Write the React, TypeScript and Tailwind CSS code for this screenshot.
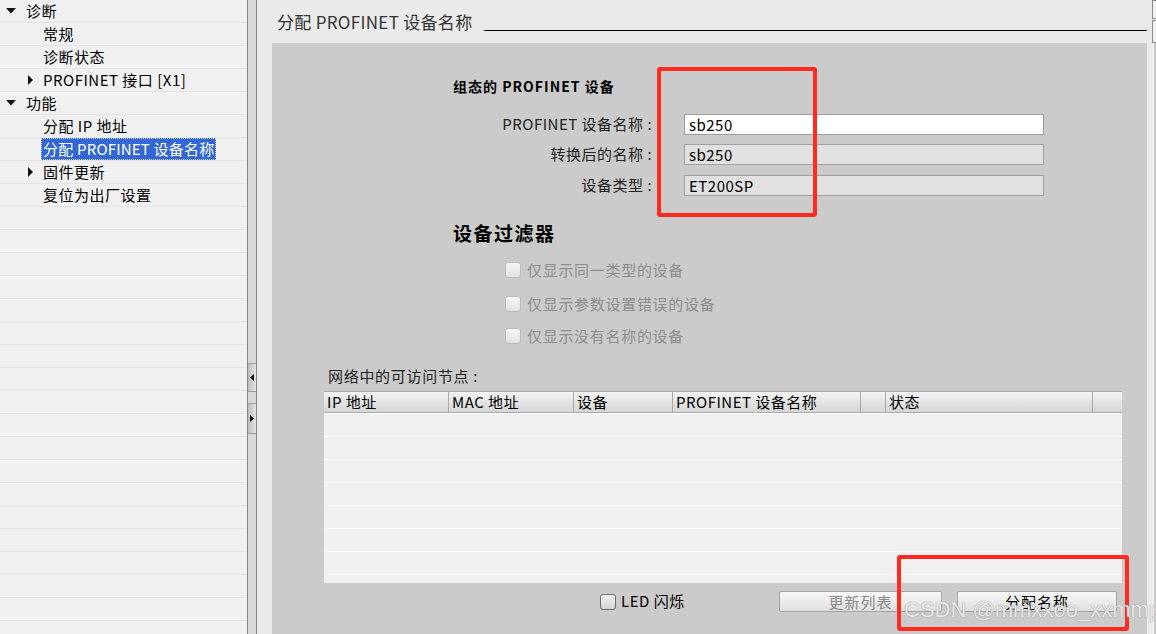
import React from 'react';

// 树形导航的条目
type TreeItem = {
  text: string;
  level: 0 | 1;
  arrow?: 'down' | 'right';
  selected?: boolean;
};

const treeItems: TreeItem[] = [
  { text: '诊断', level: 0, arrow: 'down' },
  { text: '常规', level: 1 },
  { text: '诊断状态', level: 1 },
  { text: 'PROFINET 接口 [X1]', level: 1, arrow: 'right' },
  { text: '功能', level: 0, arrow: 'down' },
  { text: '分配 IP 地址', level: 1 },
  { text: '分配 PROFINET 设备名称', level: 1, selected: true },
  { text: '固件更新', level: 1, arrow: 'right' },
  { text: '复位为出厂设置', level: 1 },
];

const columns = [
  { label: 'IP 地址', w: 'w-[125px]' },
  { label: 'MAC 地址', w: 'w-[125px]' },
  { label: '设备', w: 'w-[99px]' },
  { label: 'PROFINET 设备名称', w: 'w-[188px]' },
  { label: '', w: 'w-[25px]' },
  { label: '状态', w: 'w-[207px]' },
];

const DownArrow = () => (
  <svg width="10" height="6" viewBox="0 0 10 6">
    <path d="M0 0h10L5 5.5z" fill="#111" />
  </svg>
);

const RightArrow = () => (
  <svg width="5" height="10" viewBox="0 0 5 10">
    <path d="M0 0l5 5-5 5z" fill="#111" />
  </svg>
);

const CheckBox = ({ disabled }: { disabled?: boolean }) => (
  <span
    className={
      disabled
        ? 'inline-block w-[16px] h-[16px] shrink-0 rounded-[3px] border border-[#bcbcbc] bg-linear-to-b from-[#f6f6f6] to-[#e2e2e2]'
        : 'inline-block w-[16px] h-[16px] shrink-0 rounded-[3px] border border-[#6c6c6c] bg-linear-to-b from-[#f2f2f2] to-[#d2d2d2]'
    }
  />
);

const TreeRow = ({ item }: { item?: TreeItem }) => (
  <div className="h-[23px] border-b border-[#e3e3e3] flex items-center">
    {item && (
      <>
        {item.level === 0 ? (
          <div className="w-[24px] pl-[6px] flex items-center">{item.arrow && <DownArrow />}</div>
        ) : (
          <div className="w-[41px] pl-[28px] flex items-center">{item.arrow && <RightArrow />}</div>
        )}
        <span
          className={
            item.selected
              ? 'h-[22px] leading-[22px] px-[2px] bg-[#3367d6] text-white outline outline-dotted outline-[#c8d4f0] -outline-offset-1 tracking-[0.2px]'
              : 'h-[22px] leading-[22px] px-[2px] text-black'
          }
        >
          {item.text}
        </span>
      </>
    )}
  </div>
);

const App: React.FC = () => {
  const emptyRows = Array.from({ length: 28 - treeItems.length });

  return (
    <div className="relative flex h-[634px] w-[1156px] overflow-hidden font-['Noto_Sans_CJK_SC',sans-serif] text-[15px] tracking-[0.5px] text-black">
      {/* 左侧项目树 */}
      <div className="w-[247px] shrink-0 bg-[#f0f0f0]">
        {treeItems.map((item, i) => (
          <TreeRow key={i} item={item} />
        ))}
        {emptyRows.map((_, i) => (
          <TreeRow key={'e' + i} />
        ))}
      </div>

      {/* 分隔条 */}
      <div className="w-[10px] shrink-0 flex flex-col border-x border-[#858585] bg-[#d9d9d9]">
        <div className="h-[363px]" />
        <div className="h-[29px] border-y border-[#9b9b9b] bg-linear-to-r from-[#bcbcbc] to-[#e4e4e4] flex items-center pl-[2px]">
          <svg width="4" height="7" viewBox="0 0 4 7">
            <path d="M4 0v7L0 3.5z" fill="#111" />
          </svg>
        </div>
        <div className="h-[11px]" />
        <div className="h-[31px] border-y border-[#9b9b9b] bg-linear-to-r from-[#bcbcbc] to-[#e4e4e4] flex items-center pl-[2px]">
          <svg width="4" height="7" viewBox="0 0 4 7">
            <path d="M0 0v7l4-3.5z" fill="#111" />
          </svg>
        </div>
      </div>

      {/* 右侧内容 */}
      <div className="flex-1 flex bg-[#eaeaea]">
        <div className="flex-1 flex flex-col pl-[15px] pr-[5px]">
          <div className="h-[43px] flex items-start">
            <span className="mt-[11px] pl-[5px] leading-[22px] text-[17px] text-[#333] tracking-[0.3px]">分配 PROFINET 设备名称</span>
            <div className="flex-1 ml-[12px] mt-[30px] border-t border-black" />
          </div>

          <div className="flex-1 bg-[#cbcbcb] flex flex-col">
            <div className="pl-[181px] pt-[33px] flex flex-col">
              <div className="h-[20px] leading-[20px] text-[14px] font-bold tracking-[1px]">组态的 PROFINET 设备</div>

              <div className="mt-[18px] flex items-center h-[21px]">
                <div className="w-[203px] text-right text-[#222] whitespace-pre">PROFINET 设备名称 : </div>
                <div className="ml-[28px] w-[360px] h-[21px] border border-[#9c9c9c] bg-white pl-[4px] leading-[19px]">sb250</div>
              </div>
              <div className="mt-[9px] flex items-center h-[21px]">
                <div className="w-[203px] text-right text-[#222] whitespace-pre">转换后的名称 : </div>
                <div className="ml-[28px] w-[360px] h-[21px] border border-[#a0a0a0] bg-[#e1e1e1] pl-[4px] leading-[19px]">sb250</div>
              </div>
              <div className="mt-[10px] flex items-center h-[21px]">
                <div className="w-[203px] text-right text-[#222] whitespace-pre">设备类型 : </div>
                <div className="ml-[28px] w-[360px] h-[21px] border border-[#a0a0a0] bg-[#e1e1e1] pl-[4px] leading-[19px]">ET200SP</div>
              </div>

              <div className="mt-[24px] h-[26px] leading-[26px] text-[19px] font-bold tracking-[1.5px]">设备过滤器</div>

              <div className="mt-[14px] h-[20px] pl-[52px] flex items-center gap-[6px] text-[#8d8d8d] tracking-[0.7px]">
                <CheckBox disabled />
                <span>仅显示同一类型的设备</span>
              </div>
              <div className="mt-[14px] h-[20px] pl-[52px] flex items-center gap-[6px] text-[#8d8d8d] tracking-[0.7px]">
                <CheckBox disabled />
                <span>仅显示参数设置错误的设备</span>
              </div>
              <div className="mt-[12px] h-[20px] pl-[52px] flex items-center gap-[6px] text-[#8d8d8d] tracking-[0.7px]">
                <CheckBox disabled />
                <span>仅显示没有名称的设备</span>
              </div>
            </div>

            <div className="pl-[52px] pr-[25px] flex flex-col">
              <div className="mt-[20px] h-[20px] leading-[20px] pl-[4px] tracking-[0.7px] text-[#222]">网络中的可访问节点 :</div>

              {/* 节点表格 */}
              <div className="mt-[5px]">
                <div className="h-[22px] flex border-y border-[#a9a9a9] bg-linear-to-b from-[#f3f3f3] to-[#d6d6d6]">
                  {columns.map((c, i) => (
                    <div key={i} className={`${c.w} shrink-0 border-r border-[#a9a9a9] pl-[3px] leading-[20px] whitespace-nowrap`}>
                      {c.label}
                    </div>
                  ))}
                  <div className="flex-1" />
                </div>
                <div className="h-[170px] overflow-hidden bg-[#f0f0f0] border-t border-white">
                  {Array.from({ length: 8 }).map((_, i) => (
                    <div key={i} className="h-[23px] border-b border-white" />
                  ))}
                </div>
              </div>

              <div className="mt-[8px] h-[21px] flex items-center">
                <div className="ml-[276px] w-[179px] flex items-center gap-[5px]">
                  <CheckBox />
                  <span>LED 闪烁</span>
                </div>
                <button className="w-[163px] h-[21px] rounded-[2px] border border-[#a3a3a3] bg-linear-to-b from-[#f8f8f8] to-[#dedede] text-[#8a8a8a] leading-[19px] tracking-[1px]">
                  更新列表
                </button>
                <button className="ml-[15px] w-[160px] h-[21px] rounded-[2px] border border-[#a3a3a3] bg-linear-to-b from-[#f8f8f8] to-[#dedede] text-black leading-[19px] tracking-[1px]">
                  分配名称
                </button>
              </div>
            </div>
          </div>
        </div>

        {/* 右边缘 */}
        <div className="w-[4px] flex flex-col">
          <div className="h-[19px] border-l border-y border-[#8a8a8a] bg-[#f2f2f2]" />
          <div className="h-[1px]" />
          <div className="h-[23px] border-l border-y border-[#8a8a8a] bg-[#f2f2f2]" />
          <div className="flex-1 bg-[#cbcbcb] border-l-2 border-[#f1f1f1]" />
        </div>
      </div>

      {/* 红色标注框 */}
      <div className="absolute left-[657px] top-[67px] w-[160px] h-[150px] border-[4px] border-[#ff2a1f] rounded-[3px]" />
      <div className="absolute left-[897px] top-[555px] w-[232px] h-[76px] border-[4px] border-[#ff2a1f] rounded-[3px]" />

      {/* 水印 */}
      <div className="absolute left-[904px] top-[599px] whitespace-nowrap font-['Liberation_Sans',sans-serif] text-[22px] leading-[22px] tracking-normal text-[#f6f6f6]/90 [text-shadow:0_0_1px_#777]">
        CSDN @mmxxoo_xxmmp
      </div>
    </div>
  );
};

export default App;
